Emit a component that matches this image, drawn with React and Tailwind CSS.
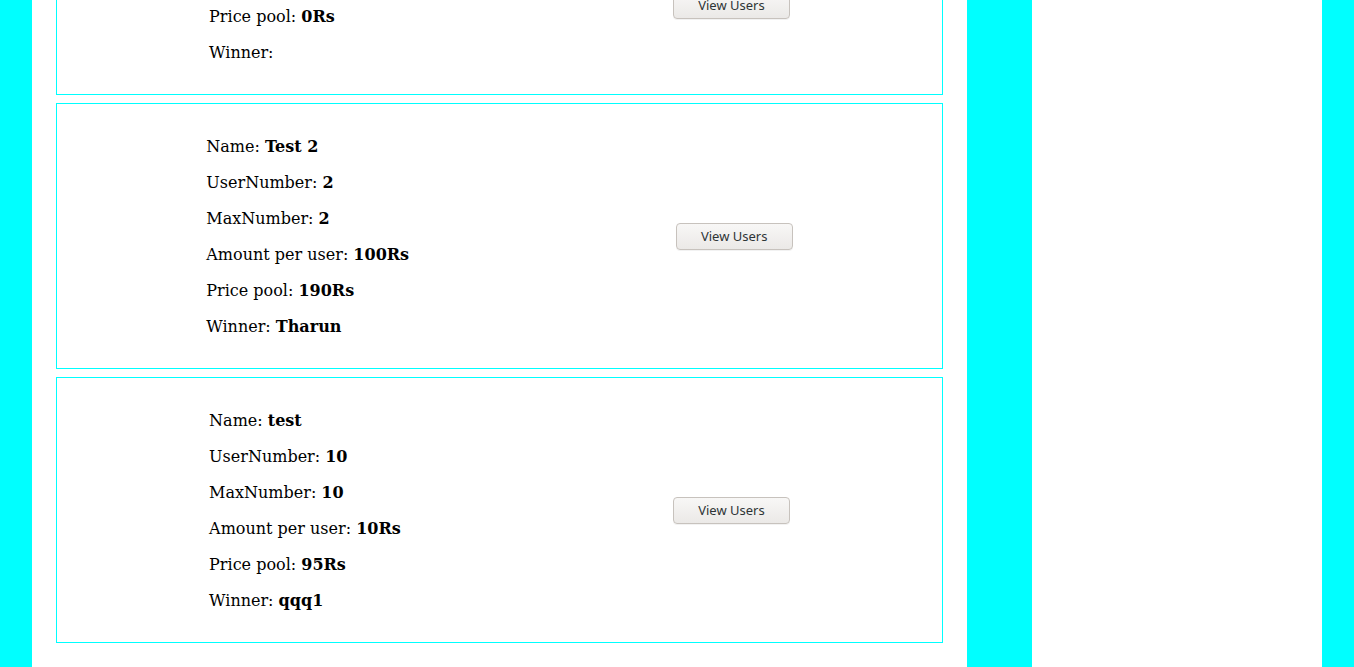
const contests = [
  {
    name: "test 3",
    userNumber: 0,
    maxNumber: 10,
    amount: "10Rs",
    pool: "0Rs",
    winner: "",
    canJoin: true,
  },
  {
    name: "Test 2",
    userNumber: 2,
    maxNumber: 2,
    amount: "100Rs",
    pool: "190Rs",
    winner: "Tharun",
  },
  {
    name: "test",
    userNumber: 10,
    maxNumber: 10,
    amount: "10Rs",
    pool: "95Rs",
    winner: "qqq1",
  },
];

function Btn({ children }) {
  return (
    <button className="w-[117px] h-[27px] rounded-[4px] border border-[#c7c2bd] bg-gradient-to-b from-[#f8f7f6] to-[#ebe9e7] text-[13px] text-[#2e3436] font-['Noto_Sans',sans-serif] leading-none shadow-[0_1px_0_rgba(0,0,0,0.05)]">
      {children}
    </button>
  );
}

function ContestCard({ c }) {
  return (
    <div className="border border-[#00ffff] p-4 flex justify-around items-center">
      <div className="pt-[17px] pb-[15px] flex flex-col gap-4 text-[16px] leading-5 text-black font-['DejaVu_Serif',serif]">
        <p>
          Name: <b>{c.name}</b>
        </p>
        <p>
          UserNumber: <b>{c.userNumber}</b>
        </p>
        <p>
          MaxNumber: <b>{c.maxNumber}</b>
        </p>
        <p>
          Amount per user: <b>{c.amount}</b>
        </p>
        <p>
          Price pool: <b>{c.pool}</b>
        </p>
        <p>
          Winner: <b>{c.winner}</b>
        </p>
      </div>
      {c.canJoin ? (
        <div className="flex flex-col items-center gap-[59px]">
          <Btn>Join</Btn>
          <Btn>View Users</Btn>
        </div>
      ) : (
        <Btn>View Users</Btn>
      )}
    </div>
  );
}

export default function App() {
  return (
    <div className="h-screen overflow-hidden bg-[#00ffff] flex px-8 gap-[65px]">
      <div className="w-[935px] bg-white px-6">
        <div className="-mt-[171px] flex flex-col gap-2">
          {contests.map((c, i) => (
            <ContestCard key={i} c={c} />
          ))}
        </div>
      </div>
      <div className="w-[290px] bg-white"></div>
    </div>
  );
}
